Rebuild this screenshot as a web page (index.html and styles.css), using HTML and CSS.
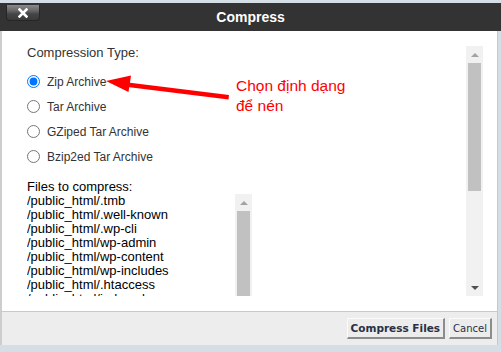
FILE: index.html
```html
<!DOCTYPE html>
<html>
<head>
<meta charset="utf-8">
<title>Compress</title>
<link rel="stylesheet" href="styles.css">
</head>
<body>
<div class="dialog">
  <div class="titlebar">
    <button class="close" type="button" aria-label="Close">
      <svg width="10" height="10" viewBox="0 0 10 10"><path d="M1.5 1.5 L8.5 8.5 M8.5 1.5 L1.5 8.5" stroke="#fff" stroke-width="2.6" stroke-linecap="square"/></svg>
    </button>
    <div class="title">Compress</div>
    <div></div>
  </div>
  <div class="content">
    <div class="scrollarea">
      <div class="scroll-content">
        <div class="label">Compression Type:</div>
        <div class="options">
          <label class="opt"><input type="radio" name="t" checked><span>Zip Archive</span></label>
          <label class="opt"><input type="radio" name="t"><span>Tar Archive</span></label>
          <label class="opt"><input type="radio" name="t"><span>GZiped Tar Archive</span></label>
          <label class="opt"><input type="radio" name="t"><span>Bzip2ed Tar Archive</span></label>
        </div>
        <div class="files-label">Files to compress:</div>
        <div class="listbox">
          <div class="list">
            <div>/public_html/.tmb</div>
            <div>/public_html/.well-known</div>
            <div>/public_html/.wp-cli</div>
            <div>/public_html/wp-admin</div>
            <div>/public_html/wp-content</div>
            <div>/public_html/wp-includes</div>
            <div>/public_html/.htaccess</div>
            <div>/public_html/index.php</div>
          </div>
          <div class="vscroll inner">
            <div class="arrow up"></div>
            <div class="thumb"></div>
          </div>
        </div>
      </div>
      <div class="vscroll outer">
        <div class="arrow up"></div>
        <div class="thumb"></div>
        <div class="track"></div>
        <div class="arrow down"></div>
      </div>
    </div>
    <div class="note">Chọn định dạng<br>để nén</div>
    <svg class="pointer" width="135" height="32" viewBox="100 70 135 32">
      <polygon points="106,81 131,75.5 128.5,92" fill="#ff0000"/>
      <polygon points="126,82.2 229,95 228.5,99.4 125.5,86.8" fill="#ff0000"/>
    </svg>
  </div>
  <div class="footer">
    <button class="btn primary" type="button">Compress Files</button>
    <button class="btn" type="button">Cancel</button>
  </div>
</div>
</body>
</html>
```
FILE: styles.css
```css
html, body {
  margin: 0;
  padding: 0;
}
body {
  background: #d6dee5;
  width: 501px;
  height: 352px;
  overflow: hidden;
  font-family: "Liberation Sans", Arial, sans-serif;
}
.dialog {
  margin-top: 3px;
  width: 501px;
  display: flex;
  flex-direction: column;
}
.titlebar {
  height: 28px;
  background: #333333;
  display: grid;
  grid-template-columns: 1fr auto 1fr;
  align-items: center;
}
.close {
  justify-self: start;
  align-self: start;
  margin: 2px 0 0 6px;
  width: 34px;
  height: 16px;
  padding: 0;
  border: 1px solid #262626;
  border-top: none;
  border-radius: 0 0 4px 4px;
  background: linear-gradient(#8a8a8a 0%, #6a6a6a 35%, #454545 60%, #3a3a3a 100%);
  display: flex;
  align-items: center;
  justify-content: center;
}
.close svg {
  display: block;
}
.title {
  color: #ffffff;
  font-weight: bold;
  font-size: 14px;
  line-height: 28px;
}
.content {
  position: relative;
  height: 250px;
  padding: 15px 14px 15px 25px;
  box-sizing: content-box;
  width: 456px;
  background: #ffffff;
  border-left: 2px solid #cdcdcd;
  border-right: 1px solid #c3c9cf;
}
.scrollarea {
  display: flex;
  height: 250px;
}
.scroll-content {
  flex: 1;
  overflow: hidden;
}
.label {
  font-size: 13px;
  line-height: 14px;
  color: #333333;
}
.options {
  margin-top: 9px;
  display: flex;
  flex-direction: column;
}
.opt {
  height: 25px;
  display: flex;
  align-items: center;
  gap: 7px;
  font-size: 12px;
  color: #333333;
}
.opt input {
  margin: 0;
  width: 13px;
  height: 13px;
}
.files-label {
  margin-top: 11px;
  font-size: 13px;
  line-height: 14px;
  color: #000000;
}
.listbox {
  display: flex;
  width: 225px;
  height: 130px;
}
.list {
  flex: 1;
  overflow: hidden;
  font-size: 13px;
  line-height: 14px;
  color: #000000;
}
.vscroll {
  width: 17px;
  background: #f1f1f1;
  display: flex;
  flex-direction: column;
}
.arrow {
  height: 17px;
  display: flex;
  align-items: center;
  justify-content: center;
}
.arrow::before {
  content: "";
  width: 0;
  height: 0;
  border-left: 4px solid transparent;
  border-right: 4px solid transparent;
}
.arrow.up::before {
  border-bottom: 4px solid #a3a3a3;
}
.arrow.down::before {
  border-top: 4px solid #505050;
}
.thumb {
  margin: 0 2px;
  background: #c1c1c1;
}
.outer .thumb {
  height: 128px;
}
.outer .track {
  flex: 1;
}
.inner .thumb {
  flex: 1;
}
.note {
  position: absolute;
  left: 234px;
  top: 45px;
  color: #ff0000;
  font-size: 15.5px;
  line-height: 20px;
}
.pointer {
  position: absolute;
  left: 98px;
  top: 39px;
}
.footer {
  height: 34px;
  background: #ededed;
  border-top: 1px solid #c9c9c9;
  border-left: 2px solid #cdcdcd;
  border-right: 1px solid #c3c9cf;
  display: flex;
  justify-content: flex-end;
  align-items: center;
  gap: 4px;
  padding-right: 5px;
  box-sizing: border-box;
  width: 498px;
}
.btn {
  height: 21px;
  margin: 0;
  padding: 0 3px;
  background: #ececec;
  border-style: solid;
  border-width: 1px 2px 2px 1px;
  border-color: #fafafa #8c8c8c #8c8c8c #fafafa;
  font-family: "DejaVu Sans", Verdana, sans-serif;
  font-size: 10px;
  color: #2a2f45;
}
.btn.primary {
  font-weight: bold;
  font-size: 10.5px;
}
```
